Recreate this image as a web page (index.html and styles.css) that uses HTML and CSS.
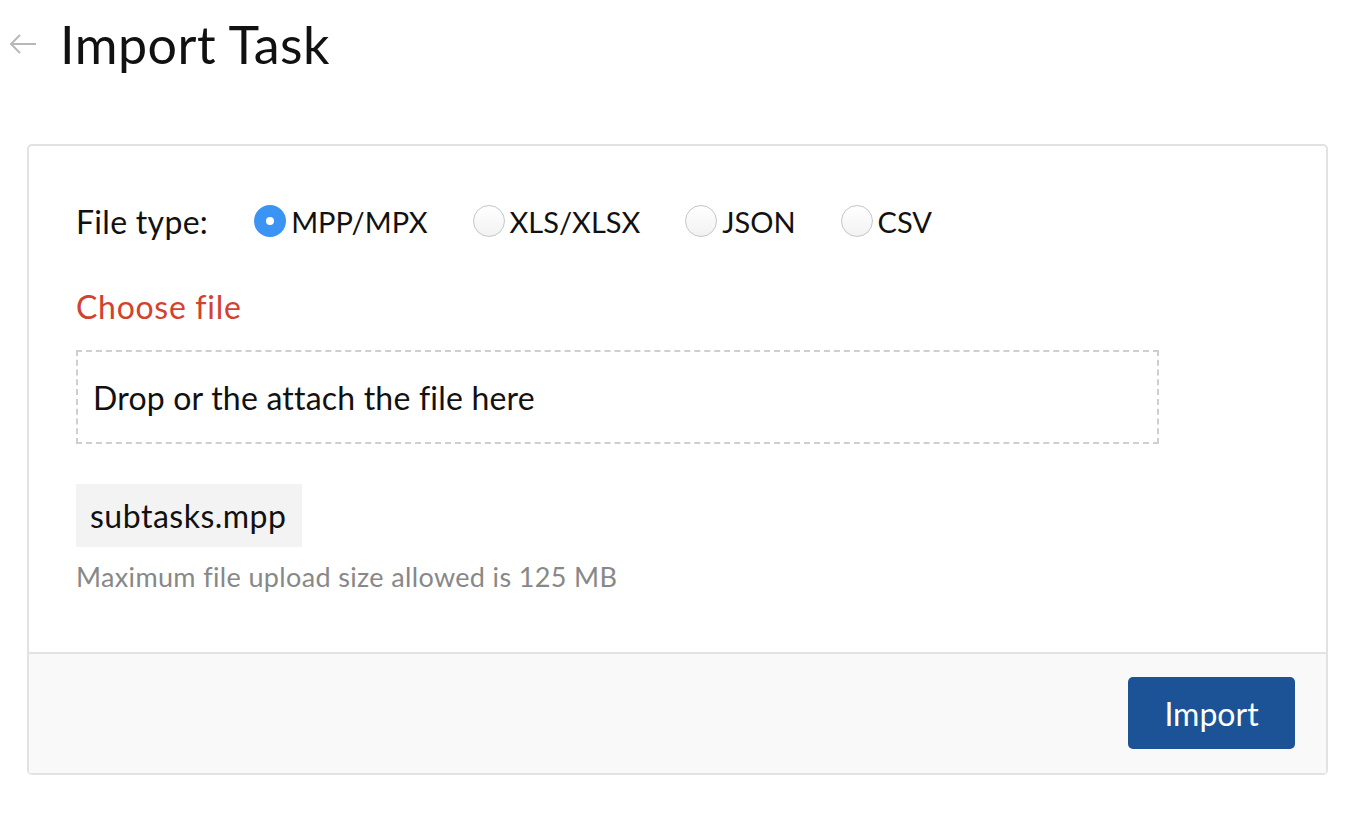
FILE: index.html
```html
<!DOCTYPE html>
<html lang="en">

<head>
    <meta charset="UTF-8">
    <meta name="viewport" content="width=device-width, initial-scale=1.0">
    <title>Import Task</title>
    <link rel="stylesheet" href="styles.css">
</head>

<body>

    <div class="top">
        <a class="back" href="#">
            <svg width="28" height="20" viewBox="0 0 28 20">
                <path d="M27 10H2M11 1L2 10l9 9" fill="none" stroke="#b8b8b8" stroke-width="2" />
            </svg>
        </a>
        <h1>Import Task</h1>
    </div>

    <div class="card">
        <div class="card-body">

            <div class="types">
                <span class="label">File type:</span>
                <label class="opt"><span class="radio on"></span>MPP/MPX</label>
                <label class="opt"><span class="radio"></span>XLS/XLSX</label>
                <label class="opt"><span class="radio"></span>JSON</label>
                <label class="opt"><span class="radio"></span>CSV</label>
            </div>

            <div class="choose">Choose file</div>

            <div class="drop">Drop or the attach the file here</div>

            <div class="chip">subtasks.mpp</div>

            <div class="hint">Maximum file upload size allowed is 125 MB</div>

        </div>
        <div class="card-foot">
            <button class="btn">Import</button>
        </div>
    </div>

</body>

</html>
```

FILE: styles.css
```css
body {
    margin: 0;
    font-family: Lato, "Noto Sans", sans-serif;
    color: #111;
    background: #fff;
}

.top {
    display: flex;
    align-items: center;
    height: 88px;
    padding-left: 9px;
}

.back {
    display: flex;
    width: 51px;
}

h1 {
    margin: 0;
    font-weight: 400;
    font-size: 52px;
    letter-spacing: 0.5px;
}

.card {
    margin: 56px 34px 0 27px;
    border: 2px solid #e2e2e2;
    border-radius: 5px;
}

.card-body {
    padding: 51px 47px 59px;
}

.types {
    display: flex;
    align-items: center;
    font-size: 32px;
    letter-spacing: 0.3px;
    height: 48px;
}

.label {
    margin-right: 46px;
}

.opt {
    display: flex;
    align-items: center;
    margin-right: 45px;
    font-size: 29px;
    letter-spacing: 0;
}

.radio {
    width: 32px;
    height: 32px;
    border: 1px solid #c6c6c6;
    border-radius: 50%;
    background: linear-gradient(#fff, #f2f2f2);
    margin-right: 5px;
    box-sizing: border-box;
}

.radio.on {
    border: 12px solid #3b94f4;
    background: #fff;
}

.choose {
    color: #d3412f;
    font-size: 32px;
    letter-spacing: 0.7px;
    line-height: 38px;
    margin-top: 43px;
}

.drop {
    margin-top: 24px;
    width: 1083px;
    height: 94px;
    box-sizing: border-box;
    border: 2px dashed #cfcfcf;
    padding-left: 15px;
    display: flex;
    align-items: center;
    font-size: 32px;
    letter-spacing: 0.2px;
}

.chip {
    display: inline-block;
    margin-top: 40px;
    background: #f3f3f3;
    font-size: 32px;
    letter-spacing: 0.5px;
    padding: 0 15px 0 14px;
    line-height: 63px;
}

.hint {
    color: #888;
    font-size: 27px;
    letter-spacing: 0.35px;
    line-height: 32px;
    margin-top: 14px;
}

.card-foot {
    background: #f9f9f9;
    border-top: 2px solid #e2e2e2;
    padding: 23px 31px 24px;
    display: flex;
    justify-content: flex-end;
}

.btn {
    background: #1b5396;
    color: #fff;
    border: 0;
    border-radius: 5px;
    font-family: inherit;
    font-size: 32px;
    width: 167px;
    height: 72px;
}
```
